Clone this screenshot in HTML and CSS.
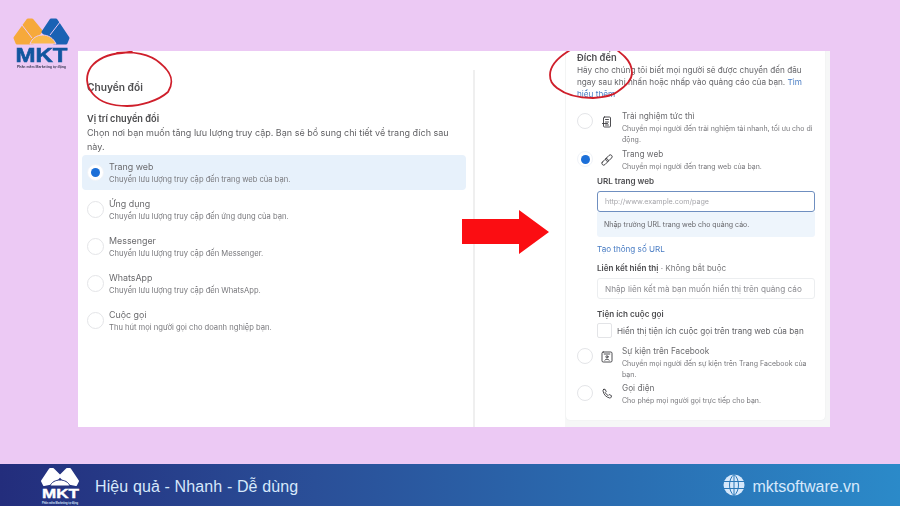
FILE: index.html
```html
<!DOCTYPE html>
<html lang="vi">
<head>
<meta charset="utf-8">
<title>Chuyển đổi</title>
<link rel="stylesheet" href="styles.css">
</head>
<body>
<main class="stage">
  <svg class="logo" viewBox="0 0 58 56" aria-label="MKT">
    <path class="lg-orange" d="M15 3 L19 3 L28 14 L20 26 L4 26 L2 21 Z"/>
    <path class="lg-blue" d="M38 3 L43 3 L55 21 L53 26 L41 26 L30 15 Z"/>
    <path class="lg-sun" d="M17 27 C21 15 38 15 43 27 Z"/>
    <path class="lg-gap" d="M9 8 L19 21 M47 5 L37 18"/>
    <text class="lg-text" x="2.500" y="45" textLength="52" lengthAdjust="spacingAndGlyphs">MKT</text>
    <text class="lg-tag" x="4" y="51" textLength="49" lengthAdjust="spacingAndGlyphs">Phần mềm Marketing tự động</text>
  </svg>

  <div class="sheet">
    <section class="left">
      <h1 class="l-title">Chuyển đổi</h1>
      <h2 class="l-label">Vị trí chuyển đổi</h2>
      <p class="l-desc">Chọn nơi bạn muốn tăng lưu lượng truy cập. Bạn sẽ bổ sung chi tiết về trang đích sau này.</p>
      <ul class="l-list">
        <li class="l-row selected">
          <span class="radio on"></span>
          <div><div class="r-title">Trang web</div><div class="r-sub">Chuyển lưu lượng truy cập đến trang web của bạn.</div></div>
        </li>
        <li class="l-row">
          <span class="radio"></span>
          <div><div class="r-title">Ứng dụng</div><div class="r-sub">Chuyển lưu lượng truy cập đến ứng dụng của bạn.</div></div>
        </li>
        <li class="l-row">
          <span class="radio"></span>
          <div><div class="r-title">Messenger</div><div class="r-sub">Chuyển lưu lượng truy cập đến Messenger.</div></div>
        </li>
        <li class="l-row">
          <span class="radio"></span>
          <div><div class="r-title">WhatsApp</div><div class="r-sub">Chuyển lưu lượng truy cập đến WhatsApp.</div></div>
        </li>
        <li class="l-row">
          <span class="radio"></span>
          <div><div class="r-title">Cuộc gọi</div><div class="r-sub">Thu hút mọi người gọi cho doanh nghiệp bạn.</div></div>
        </li>
      </ul>
    </section>

    <div class="middle"></div>

    <div class="right-wrap">
      <section class="card">
        <h2 class="c-title">Đích đến</h2>
        <p class="c-desc">Hãy cho chúng tôi biết mọi người sẽ được chuyển đến đâu ngay sau khi nhấn hoặc nhấp vào quảng cáo của bạn. <span class="link">Tìm hiểu thêm</span></p>

        <div class="d-row first">
          <span class="radio"></span>
          <svg class="d-icon" viewBox="0 0 12 12"><rect x="2.500" y="1" width="7" height="10" rx="1"/><path d="M4.500 3.500h3M4.500 6h3M1.500 7.500h5M4.500 9h3"/></svg>
          <div class="d-text"><div class="r-title">Trải nghiệm tức thì</div><div class="r-sub">Chuyển mọi người đến trải nghiệm tải nhanh, tối ưu cho di động.</div></div>
        </div>
        <div class="d-row">
          <span class="radio on"></span>
          <svg class="d-icon" viewBox="0 0 12 12"><rect x="-0.500" y="4.200" width="7.500" height="3.600" rx="1.800" transform="rotate(-45 6 6)"/><rect x="5" y="4.200" width="7.500" height="3.600" rx="1.800" transform="rotate(-45 6 6)"/></svg>
          <div class="d-text"><div class="r-title">Trang web</div><div class="r-sub">Chuyển mọi người đến trang web của bạn.</div></div>
        </div>

        <div class="detail">
          <div class="f-label url">URL trang web</div>
          <div class="input focus">http://www.example.com/page</div>
          <div class="hint">Nhập trường URL trang web cho quảng cáo.</div>
          <div class="link param">Tạo thông số URL</div>
          <div class="f-label show"><b>Liên kết hiển thị</b> · <span>Không bắt buộc</span></div>
          <div class="input plain">Nhập liên kết mà bạn muốn hiển thị trên quảng cáo</div>
          <div class="f-label util">Tiện ích cuộc gọi</div>
          <label class="check"><span class="box"></span>Hiển thị tiện ích cuộc gọi trên trang web của bạn</label>
        </div>

        <div class="d-row ev">
          <span class="radio"></span>
          <svg class="d-icon" viewBox="0 0 12 12"><rect x="1" y="1" width="10" height="10" rx="1.200"/><path d="M3.200 3h5.600"/><circle cx="6" cy="5.800" r="1.100"/><path d="M3.800 9.200c.3-1.500 4.100-1.500 4.400 0"/></svg>
          <div class="d-text"><div class="r-title">Sự kiện trên Facebook</div><div class="r-sub">Chuyển mọi người đến sự kiện trên Trang Facebook của bạn.</div></div>
        </div>
        <div class="d-row call">
          <span class="radio"></span>
          <svg class="d-icon" viewBox="0 0 12 12"><path d="M2.500 1.500l1.500-.3 1.200 2.300-1 1c.6 1.400 1.600 2.400 3 3l1-1 2.300 1.200-.3 1.500c-.2.600-.9.900-1.500.8C5 9 3 7 2 3c-.1-.6.100-1.300.5-1.500z"/></svg>
          <div class="d-text"><div class="r-title">Gọi điện</div><div class="r-sub">Cho phép mọi người gọi trực tiếp cho bạn.</div></div>
        </div>
      </section>
    </div>

    <svg class="marks" viewBox="0 0 752 376">
      <path class="ring" d="M39 2 C55 0 72 3 82 12 C93 21 97 30 90 41 C80 50 62 55 49 55 C34 55 22 51 15 43 C8 35 7 25 13 16 C20 7 32 3 44 2 C48 2 52 1 54 0"/>
      <path class="ring" d="M494 -2 C480 6 472 15 472 24 C472 30 474 33 479 37 C488 44 502 47 515 47 C527 46 534 45 539 41 C548 35 554 29 554 22 C554 16 552 11 547 6 C544 3 541 1 537 -3"/>
      <polygon class="arrow" points="384,168 441,168 441,159 471,181 441,203 441,193 384,193"/>
    </svg>
  </div>
</main>

<footer class="bar">
  <div class="bar-left">
    <svg class="bar-logo" viewBox="0 0 40 40" aria-label="MKT">
      <path class="bl-shape" d="M10 4 L13 4 L20 11 L14 18 L4 20 L2 16 Z"/>
      <path class="bl-shape" d="M27 4 L30 4 L38 16 L36 20 L26 18 L20 11 Z"/>
      <path class="bl-sun" d="M10 21 C13 13 27 13 30 21 Z"/>
      <text x="2" y="32.500" textLength="37" lengthAdjust="spacingAndGlyphs">MKT</text>
      <text class="mini" x="2" y="38.500" textLength="36" lengthAdjust="spacingAndGlyphs">Phần mềm Marketing tự động</text>
    </svg>
    <span class="slogan">Hiệu quả - Nhanh - Dễ dùng</span>
  </div>
  <div class="bar-right">
    <svg class="globe" viewBox="0 0 22 22">
      <circle class="g-fill" cx="11" cy="11" r="10.500"/>
      <path class="g-line" d="M.5 7.500h21M.5 14.500h21M11 .5v21M11 .5C5 5 5 17 11 21.500M11 .5c6 4.500 6 16.500 0 21"/>
    </svg>
    <span class="site">mktsoftware.vn</span>
  </div>
</footer>
</body>
</html>
```

FILE: styles.css
```css
* { box-sizing: border-box; }
html, body { margin: 0; padding: 0; }
body {
  width: 900px;
  height: 506px;
  overflow: hidden;
  display: flex;
  flex-direction: column;
  background: #ecc9f4;
  font-family: Inter, "Noto Sans", sans-serif;
}
h1, h2, p, ul { margin: 0; padding: 0; }
ul { list-style: none; }

.stage {
  position: relative;
  flex: 1;
  padding: 51px 70px 37px 78px;
}

.logo { position: absolute; left: 13px; top: 17px; width: 58px; height: 56px; filter: blur(.3px); }
.lg-orange { fill: #f6a93b; stroke: #f6a93b; stroke-width: 3; stroke-linejoin: round; }
.lg-blue { fill: #1a62b4; stroke: #1a62b4; stroke-width: 3; stroke-linejoin: round; }
.lg-sun { fill: #f9b94c; stroke: #ecc9f4; stroke-width: 1; }
.lg-gap { fill: none; stroke: #ecc9f4; stroke-width: 1; }
.lg-text { font: 900 21px "Liberation Sans", sans-serif; fill: #12569f; stroke: #12569f; stroke-width: .6px; }
.lg-tag { font: 700 3.500px "Liberation Sans", sans-serif; fill: #3a3a55; }

.sheet {
  position: relative;
  height: 376px;
  display: flex;
  overflow: hidden;
  background: #fff;
  filter: blur(.3px);
}
.marks { position: absolute; inset: 0; width: 752px; height: 376px; overflow: hidden; }
.ring { fill: none; stroke: #cf1f2b; stroke-width: 1.800; stroke-linecap: round; }
.arrow { fill: #fb0d12; }

.left {
  flex: none;
  width: 395px;
  padding: 29px 7px 0 9px;
  color: #555;
}
.l-title { font-size: 10.200px; font-weight: 600; line-height: 14px; color: #4d4d4f; }
.l-label { margin-top: 18px; font-size: 9.200px; font-weight: 600; line-height: 13px; color: #4a4a4c; }
.l-desc { margin-top: 1px; width: 372px; font-size: 9px; line-height: 14px; color: #626265; }
.l-list { margin: 1px 0 0 -5px; }
.l-row {
  display: flex;
  align-items: center;
  height: 35px;
  margin-bottom: 2px;
  padding-left: 5px;
  gap: 5px;
  border-radius: 4px;
}
.l-row.selected { background: #e7f1fb; }

.radio {
  flex: none;
  width: 17px;
  height: 17px;
  border-radius: 50%;
  background: #fff;
  border: 1px solid #e4e5e8;
  display: flex;
  align-items: center;
  justify-content: center;
}
.radio.on::after {
  content: "";
  width: 9px;
  height: 9px;
  border-radius: 50%;
  background: #1c6fd8;
}
.radio.on { border-color: #f0f3f8; }
.r-title { font-size: 8.900px; line-height: 12px; color: #6b6b6e; }
.r-sub { font-size: 7.600px; line-height: 11px; margin-top: 1px; color: #77777b; }

.middle {
  width: 2px;
  margin-top: 19px;
  background: #efefef;
  flex: none;
}

.right-wrap {
  flex: none;
  width: 355px;
  padding: 0 5px 7px 91px;
  background: linear-gradient(to right, #fff 90px, #f6f7f7 90px);
}
.card {
  height: 100%;
  padding: 1px 9px 0 11px;
  background: #fff;
  border-radius: 0 0 4px 4px;
  box-shadow: 0 0 1px #dcdfe0;
}
.c-title { font-size: 9.300px; font-weight: 600; line-height: 12px; color: #4c4c4f; }
.c-desc { font-size: 8.200px; line-height: 12px; color: #66666a; }
.link { color: #4a7dc4; }

.d-row { display: flex; align-items: flex-start; }
.d-row .radio { margin-top: 2px; width: 16px; height: 16px; }
.d-row.first { margin-top: 11px; }
.d-row.first + .d-row { margin-top: 4px; }
.d-icon {
  flex: none;
  width: 12px;
  height: 12px;
  margin: 5px 0 0 8px;
  fill: none;
  stroke: #3a3a3e;
  stroke-width: .9;
  stroke-linecap: round;
  stroke-linejoin: round;
}
.d-text { margin-left: 9px; width: 196px; }
.d-row .r-title { font-size: 8.250px; line-height: 11px; }
.d-row .r-sub { font-size: 7px; line-height: 11px; margin-top: 1px; }

.detail { margin: 0 0 0 20px; }
.f-label { font-size: 8.100px; font-weight: 600; line-height: 12px; color: #4d4d50; }
.f-label.url { margin-top: 3px; }
.f-label.show { margin-top: 7px; font-weight: 400; color: #77777a; }
.f-label.show b { font-weight: 600; color: #4d4d50; }
.f-label.util { margin-top: 9px; }
.input {
  height: 21px;
  width: 218px;
  margin-top: 4px;
  padding-left: 7px;
  display: flex;
  align-items: center;
  border-radius: 3px;
  font-size: 8.200px;
  color: #8b8b90;
  background: #fff;
}
.input.focus { border: 1px solid #6f8fc0; font-size: 7.150px; color: #a5a5aa; }
.input.plain { border: 1px solid #eceef0; }
.hint {
  width: 218px;
  height: 25px;
  padding-left: 7px;
  display: flex;
  align-items: center;
  font-size: 7px;
  color: #66666a;
  background: #eef5fc;
  border-radius: 0 0 3px 3px;
}
.param { margin-top: 6px; font-size: 8.100px; line-height: 12px; }
.check {
  display: flex;
  align-items: center;
  gap: 5px;
  margin-top: 3px;
  font-size: 8.170px;
  color: #626266;
}
.box {
  flex: none;
  width: 15px;
  height: 15px;
  border: 1px solid #e3e4e7;
  border-radius: 2px;
  background: #fff;
}
.d-row.ev { margin-top: 8px; }
.d-row.call { margin-top: 3px; }

.bar {
  height: 42px;
  flex: none;
  display: flex;
  align-items: center;
  justify-content: space-between;
  padding: 0 40px;
  background: linear-gradient(90deg, #232d7c 0%, #2a4f98 35%, #2a6eb2 70%, #2b8ac9 100%);
  color: #d6e8fb;
  font-family: "Liberation Sans", sans-serif;
}
.bar-left, .bar-right { display: flex; align-items: center; }
.bar-logo { width: 40px; height: 40px; }
.bl-shape { fill: #fff; stroke: #fff; stroke-width: 2; stroke-linejoin: round; }
.bl-sun { fill: #fff; stroke: #27367f; stroke-width: 1; }
.bar-logo text { font: 900 13px "Liberation Sans", sans-serif; fill: #fff; stroke: #fff; stroke-width: .4px; }
.bar-logo .mini { font: 700 2.800px "Liberation Sans", sans-serif; stroke: none; fill: #d6e8fb; }
.slogan { margin-left: 15px; padding-top: 3px; font-size: 16px; letter-spacing: .12px; }
.globe { width: 22px; height: 22px; }
.g-fill { fill: #d6e8fb; }
.g-line { fill: none; stroke: #2b78b8; stroke-width: 1; }
.site { margin-left: 7px; padding-top: 3px; font-size: 16px; }
```
